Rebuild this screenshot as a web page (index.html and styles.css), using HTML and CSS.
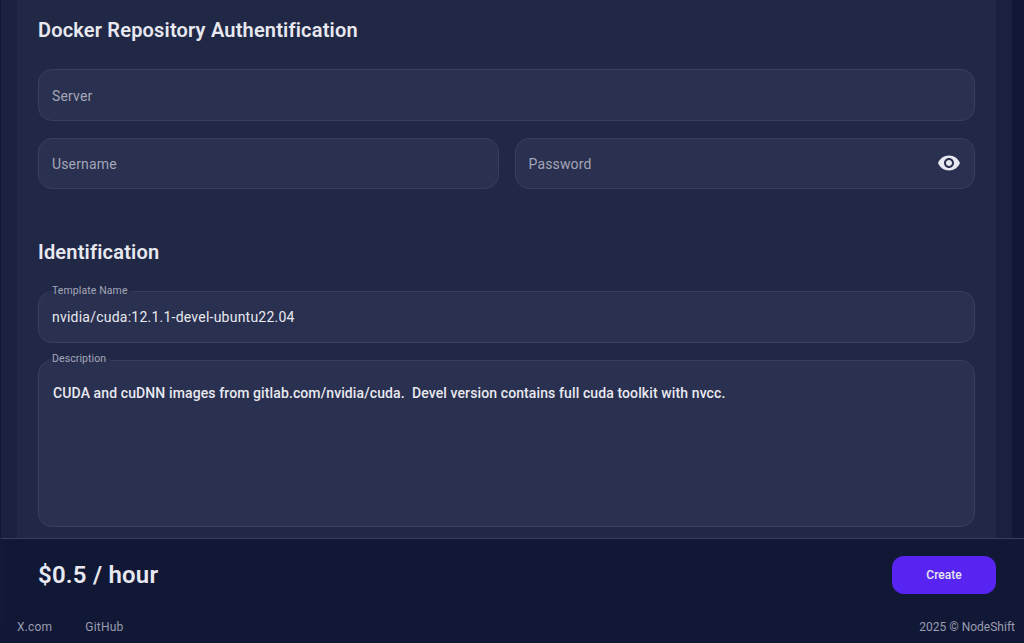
FILE: index.html
```html
<!DOCTYPE html>
<html lang="en">
<head>
<meta charset="utf-8">
<title>Template</title>
<link rel="stylesheet" href="styles.css">
</head>
<body>
<div class="page">
  <div class="rail">
    <main class="card">
      <h2 class="heading first">Docker Repository Authentification</h2>
      <div class="field"><span class="placeholder">Server</span></div>
      <div class="pair">
        <div class="field"><span class="placeholder">Username</span></div>
        <div class="field password"><span class="placeholder">Password</span>
          <svg class="eye" width="24" height="24" viewBox="0 0 24 24"><path fill="#e8e9f0" d="M12 4.5C7 4.5 2.73 7.61 1 12c1.73 4.39 6 7.5 11 7.5s9.27-3.11 11-7.5c-1.73-4.39-6-7.5-11-7.5M12 17c-2.76 0-5-2.24-5-5s2.24-5 5-5 5 2.24 5 5-2.24 5-5 5m0-8c-1.66 0-3 1.34-3 3s1.34 3 3 3 3-1.34 3-3-1.34-3-3-3"/></svg>
        </div>
      </div>
      <h2 class="heading second">Identification</h2>
      <div class="field labelled"><span class="float">Template Name</span><span class="value">nvidia/cuda:12.1.1-devel-ubuntu22.04</span></div>
      <div class="field labelled area"><span class="float">Description</span><span class="value desc">CUDA and cuDNN images from gitlab.com/nvidia/cuda.&nbsp; Devel version contains full cuda toolkit with nvcc.</span></div>
    </main>
  </div>
  <div class="bar">
    <div class="price">$0.5 / hour</div>
    <button class="create">Create</button>
  </div>
  <footer class="foot">
    <div class="links"><span>X.com</span><span>GitHub</span></div>
    <span class="copy">2025 © NodeShift</span>
  </footer>
</div>
</body>
</html>
```
FILE: styles.css
```css
* { box-sizing: border-box; }
html, body { margin: 0; height: 100%; }
body { background: #111836; font-family: Roboto, "Liberation Sans", sans-serif; overflow: hidden; }
.page { position: relative; width: 1024px; height: 643px; display: flex; flex-direction: column; }
.page::before { content: ""; position: absolute; left: 1px; top: 538px; width: 1px; height: 89px; background: #161d3b; }
.rail { height: 538px; margin: 0 12px 0 1px; background: #192040; padding: 0 16px; overflow: hidden; }
.card { height: 538px; background: #212846; padding: 0 21px; }
.heading { margin: 0; color: #e8e9f0; font-size: 20px; line-height: 24px; font-weight: 600; letter-spacing: 0.18px; }
.heading.first { padding-top: 18px; margin-bottom: 27px; }
.heading.second { margin-top: 51px; margin-bottom: 27px; }
.field { position: relative; height: 52px; background: #2a304f; border: 1px solid #383e5c; border-radius: 14px; display: flex; align-items: center; padding: 1px 13px 0; font-size: 14px; }
.field + .field { margin-top: 17px; }
.pair { display: flex; gap: 16px; margin-top: 17px; }
.pair .field { flex: 1; margin: 0; height: 51px; }
.placeholder { color: #a4a6b8; letter-spacing: 0.15px; }
.password { justify-content: space-between; padding-right: 13px; }
.eye { margin-top: -2px; }
.labelled { padding-top: 0; }
.value { color: #e8e9f0; letter-spacing: 0.23px; }
.float { position: absolute; left: 8px; top: -7px; padding: 0 5px; font-size: 10.5px; line-height: 12px; color: #a4a6b8; background: linear-gradient(#212846 50%, #2a304f 50%); letter-spacing: 0.1px; }
.area { height: 167px; align-items: flex-start; padding: 24px 14px 0; }
.area .float { top: -8px; }
.desc { line-height: 16px; font-size: 14px; font-weight: 500; letter-spacing: 0.11px; }
.bar { height: 73px; border-top: 1px solid #383e5c; display: flex; justify-content: space-between; align-items: center; padding: 0 28px 0 38px; }
.price { color: #e8e9f0; font-size: 24px; font-weight: 600; letter-spacing: 0.2px; }
.create { width: 104px; height: 38px; border: 0; border-radius: 12px; background: #5824f2; color: #e8e9f0; font: 500 12px Roboto, sans-serif; }
.foot { flex: 1; display: flex; justify-content: space-between; align-items: center; padding: 0 9px 0 17px; color: #9a9cb0; font-size: 12px; letter-spacing: 0.2px; }
.links { display: flex; gap: 33px; }
.copy { letter-spacing: 0; }
```
